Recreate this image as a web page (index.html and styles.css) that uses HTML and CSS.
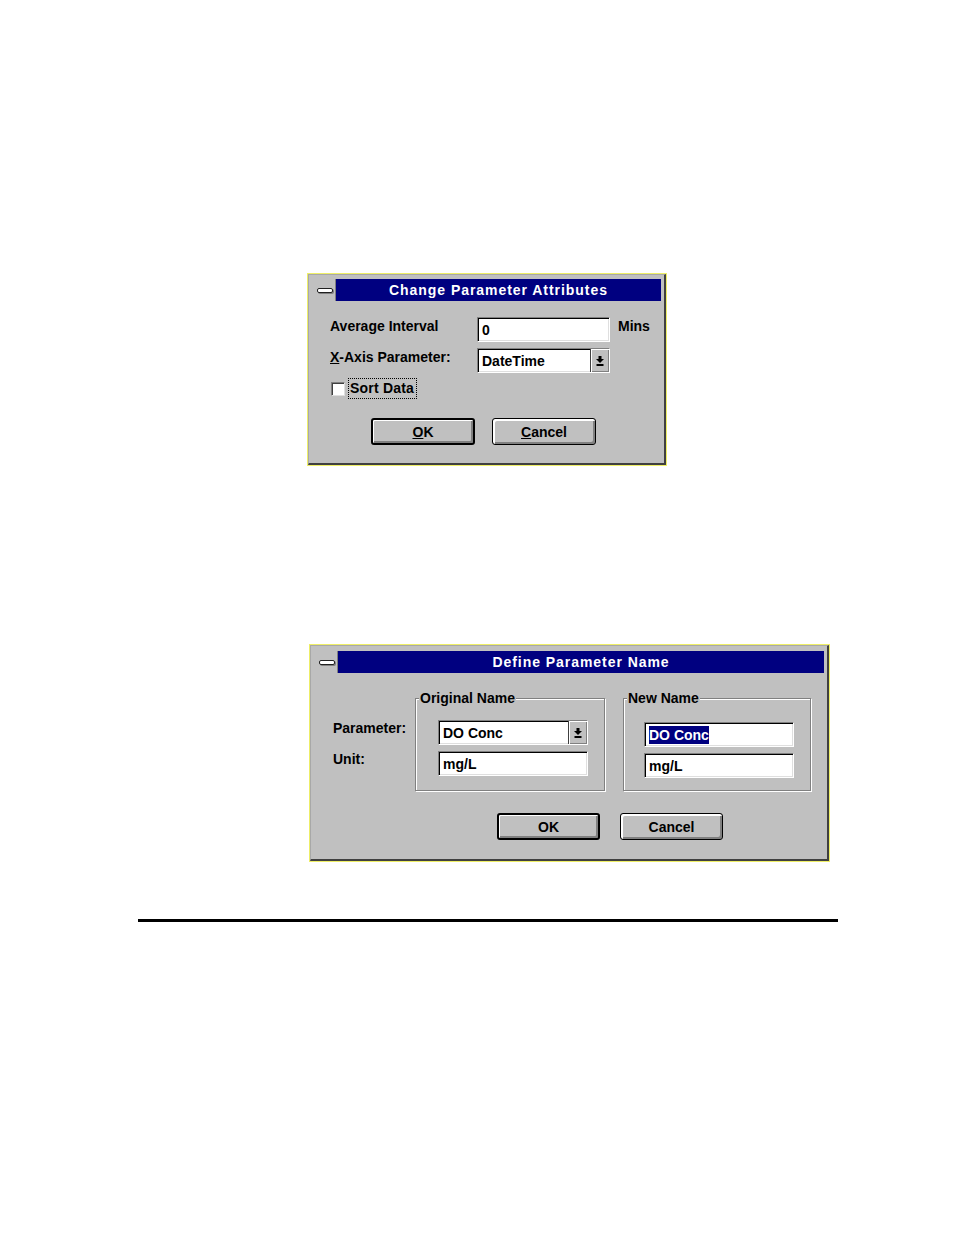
FILE: index.html
```html
<!DOCTYPE html>
<html>
<head>
<meta charset="utf-8">
<title>Dialogs</title>
<link rel="stylesheet" href="styles.css">
</head>
<body>
<div class="page">
  <div class="dlg dlg1">
    <div class="frame">
      <div class="titlebar">
        <div class="sysmenu"><span class="sysbar"></span></div>
        <div class="caption">Change Parameter Attributes</div>
      </div>
      <div class="body1">
        <div class="row">
          <span class="lbl">Average Interval</span>
          <div class="field"><span class="val">0</span></div>
          <span class="unit">Mins</span>
        </div>
        <div class="row">
          <span class="lbl"><u>X</u>-Axis Parameter:</span>
          <div class="field combo">
            <span class="val">DateTime</span>
            <span class="drop"><svg width="8" height="10" viewBox="0 0 8 10"><rect x="2.5" y="0" width="3" height="3" fill="#000"/><polygon points="0,3 8,3 4,7" fill="#000"/><rect x="0.5" y="8" width="7" height="2" fill="#000"/></svg></span>
          </div>
        </div>
        <div class="checkrow">
          <span class="check"></span>
          <span class="focus">Sort Data</span>
        </div>
        <div class="btnrow btnrow1">
          <div class="btn default"><u>O</u>K</div>
          <div class="btn"><u>C</u>ancel</div>
        </div>
      </div>
    </div>
  </div>

  <div class="dlg dlg2">
    <div class="frame frame2">
      <div class="titlebar">
        <div class="sysmenu"><span class="sysbar"></span></div>
        <div class="caption">Define Parameter Name</div>
      </div>
      <div class="body2">
        <div class="grouprow">
          <div class="labels">
            <span class="lbl">Parameter:</span>
            <span class="lbl">Unit:</span>
          </div>
          <div class="group group-orig">
            <span class="gcap">Original Name</span>
            <div class="field wide combo">
              <span class="val">DO Conc</span>
              <span class="drop"><svg width="8" height="10" viewBox="0 0 8 10"><rect x="2.5" y="0" width="3" height="3" fill="#000"/><polygon points="0,3 8,3 4,7" fill="#000"/><rect x="0.5" y="8" width="7" height="2" fill="#000"/></svg></span>
            </div>
            <div class="field wide"><span class="val">mg/L</span></div>
          </div>
          <div class="group group-new">
            <span class="gcap">New Name</span>
            <div class="field wide"><span class="val sel">DO Conc</span></div>
            <div class="field wide"><span class="val">mg/L</span></div>
          </div>
        </div>
        <div class="btnrow btnrow2">
          <div class="btn btn2 default">OK</div>
          <div class="btn btn2">Cancel</div>
        </div>
      </div>
    </div>
  </div>

  <div class="rule"></div>
</div>
</body>
</html>
```

FILE: styles.css
```css
html, body {
  margin: 0;
  padding: 0;
  background: #ffffff;
}

body {
  font-family: "Liberation Sans", Arial, sans-serif;
  font-size: 14px;
  font-weight: bold;
  color: #000;
  line-height: 16px;
}

.page {
  padding-top: 273px;
  padding-bottom: 40px;
}

/* dialog window */
.dlg {
  border: 1px solid #eeee66;
  background: #c0c0c0;
  box-sizing: border-box;
}

.dlg1 {
  margin-left: 307px;
  width: 360px;
}

.dlg2 {
  margin-left: 309px;
  margin-top: 178px;
  width: 521px;
}

.frame {
  border-top: 1px solid #a8a8a8;
  border-left: 1px solid #a8a8a8;
  border-right: 2px solid #404040;
  border-bottom: 2px solid #404040;
  padding: 4px 3px 0 5px;
}

.frame2 {
  padding-top: 5px;
}

/* title bar */
.titlebar {
  display: flex;
  height: 22px;
}

.sysmenu {
  width: 22px;
  height: 22px;
  box-sizing: border-box;
  background: #c0c0c0;
  border-right: 1px solid #808080;
  display: flex;
  align-items: center;
  justify-content: center;
}

.sysbar {
  display: block;
  width: 14px;
  height: 3px;
  background: #ffffff;
  border: 1px solid #202020;
  border-radius: 2px;
  box-shadow: 1px 1px 0 #808080;
}

.caption {
  flex: 1;
  background: #000080;
  color: #ffffff;
  text-align: center;
  line-height: 22px;
  font-size: 14px;
  letter-spacing: 0.95px;
}

/* dialog 1 body */
.body1 {
  height: 162px;
  box-sizing: border-box;
  padding: 16px 0 0 16px;
}

.row {
  display: flex;
  align-items: flex-start;
  margin-bottom: 6px;
}

.lbl {
  display: block;
  width: 147px;
  padding-top: 1px;
  line-height: 16px;
}

.unit {
  margin-left: 8px;
  padding-top: 1px;
}

.field {
  box-sizing: border-box;
  width: 133px;
  height: 25px;
  background: #ffffff;
  border: 1px solid;
  border-color: #808080 #ffffff #ffffff #808080;
  box-shadow: inset 1px 1px 0 #000000, inset -1px -1px 0 #dfdfdf;
  display: flex;
  align-items: center;
  padding-left: 4px;
}

.field.wide {
  width: 150px;
}

.combo {
  padding-right: 0;
}

.val {
  line-height: 16px;
}

.sel {
  background: #000080;
  color: #ffffff;
  padding: 1px 0;
}

.drop {
  margin-left: auto;
  align-self: stretch;
  width: 19px;
  box-sizing: border-box;
  background: #c0c0c0;
  border-left: 1px solid #404040;
  box-shadow: inset 1px 1px 0 #ffffff, inset -1px -1px 0 #808080;
  display: flex;
  align-items: center;
  justify-content: center;
}

.drop svg {
  display: block;
}

.checkrow {
  display: flex;
  align-items: center;
  height: 19px;
  margin-top: 0;
}

.check {
  width: 14px;
  height: 14px;
  box-sizing: border-box;
  margin-left: 1px;
  margin-right: 4px;
  background: #ffffff;
  border: 1px solid;
  border-color: #808080 #dfdfdf #dfdfdf #808080;
  box-shadow: inset 1px 1px 0 #404040;
}

.focus {
  display: block;
  outline: 1px dotted #000;
  outline-offset: 0;
  padding: 1px 2px 2px 1px;
  line-height: 16px;
  letter-spacing: 0.2px;
}

/* buttons */
.btnrow {
  display: flex;
}

.btnrow1 {
  margin-top: 20px;
  margin-left: 41px;
  gap: 17px;
}

.btn {
  box-sizing: border-box;
  width: 104px;
  height: 27px;
  border: 1px solid #000000;
  border-radius: 3px;
  background: #c0c0c0;
  box-shadow: inset 2px 2px 0 #ffffff, inset -2px -2px 0 #808080;
  display: flex;
  align-items: center;
  justify-content: center;
}

.btn.default {
  border-width: 2px;
  box-shadow: inset 1px 1px 0 #ffffff, inset -2px -2px 0 #808080;
}

.btn2 {
  width: 103px;
}

/* dialog 2 body */
.body2 {
  height: 186px;
  box-sizing: border-box;
  padding: 25px 0 0 17px;
}

.grouprow {
  display: flex;
  align-items: flex-start;
}

.labels {
  width: 82px;
  padding-top: 22px;
  display: flex;
  flex-direction: column;
  gap: 15px;
}

.labels .lbl {
  width: auto;
  padding-top: 0;
}

.group {
  position: relative;
  box-sizing: border-box;
  height: 93px;
  border: 1px solid #808080;
  box-shadow: inset 1px 1px 0 #ffffff, 1px 1px 0 #ffffff;
  display: flex;
  flex-direction: column;
  gap: 6px;
}

.group-orig {
  width: 190px;
  padding: 21px 0 0 22px;
}

.group-new {
  width: 188px;
  margin-left: 18px;
  padding: 23px 0 0 20px;
}

.gcap {
  position: absolute;
  top: -9px;
  left: 3px;
  padding: 0 1px;
  background: #c0c0c0;
  line-height: 16px;
}

.btnrow2 {
  margin-top: 22px;
  margin-left: 164px;
  gap: 20px;
}

.rule {
  margin-left: 138px;
  margin-top: 57px;
  width: 700px;
  height: 3px;
  background: #000000;
}
```
